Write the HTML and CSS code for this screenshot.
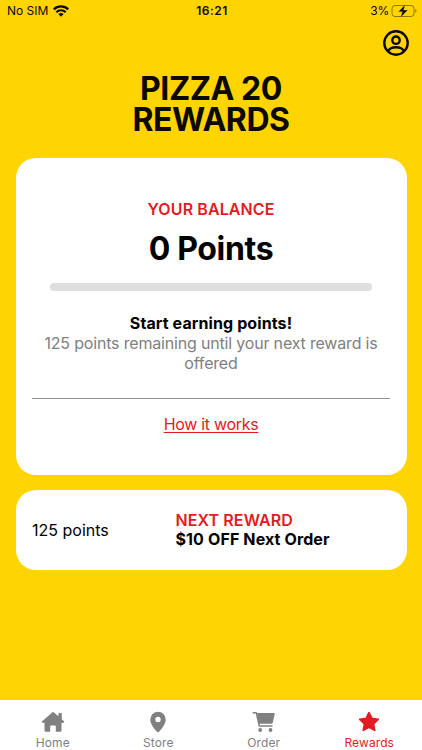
FILE: index.html
```html
<!DOCTYPE html>
<html lang="en">
<head>
<meta charset="utf-8">
<meta name="viewport" content="width=device-width, initial-scale=1">
<title>Pizza 20 Rewards</title>
<link rel="stylesheet" href="styles.css">
</head>
<body>
<div class="app">
  <header class="status">
    <div class="status-left">
      <span class="carrier">No SIM</span>
      <svg class="wifi" viewBox="0 0 16 12" width="16" height="12">
        <g fill="none" stroke="#0b0900" stroke-width="2.200">
          <path d="M.8 4.400a10.200 10.200 0 0 1 14.400 0"/>
          <path d="M3.300 7.200a6.700 6.700 0 0 1 9.400 0"/>
        </g>
        <path fill="#0b0900" d="M8 11.800 5.400 9.100a3.800 3.800 0 0 1 5.200 0z"/>
      </svg>
    </div>
    <span class="clock">16:21</span>
    <div class="status-right">
      <span class="percent">3%</span>
      <svg class="battery" viewBox="0 0 26 14" width="26" height="14">
        <rect x="1" y="1.500" width="22" height="11" rx="3" fill="none" stroke="#927800" stroke-width="1"/>
        <path d="M24.300 5.100c1.500.5 1.500 3.100 0 3.600z" fill="#927800"/>
        <path d="M14.400.2 7.400 7.800h4L9.400 13.800l7.400-7.700h-4.200z" fill="#0b0900" stroke="#ffd400" stroke-width=".3"/>
      </svg>
    </div>
  </header>

  <div class="toolbar">
    <svg class="account" viewBox="0 0 28 28" width="28" height="28" fill="none" stroke="#0b0900" stroke-width="2.400">
      <circle cx="14" cy="14" r="11.700"/>
      <circle cx="14" cy="11.200" r="3.700"/>
      <path d="M6 22.200c1.300-2.700 4.300-4 8-4s6.700 1.300 8 4"/>
    </svg>
  </div>

  <h1 class="title">PIZZA 20<br>REWARDS</h1>

  <main class="cards">
    <section class="card balance">
      <h2 class="balance-label">YOUR BALANCE</h2>
      <p class="balance-value">0 Points</p>
      <div class="progress"></div>
      <p class="cta">Start earning points!</p>
      <p class="remaining">125 points remaining until your next reward is<br>offered</p>
      <hr class="divider">
      <a class="how">How it works</a>
    </section>
    <section class="card next">
      <span class="cost">125 points</span>
      <div class="reward">
        <h2 class="reward-label">NEXT REWARD</h2>
        <p class="reward-name">$10 OFF Next Order</p>
      </div>
    </section>
  </main>

  <nav class="tabs">
    <a class="tab">
      <svg viewBox="0 0 24 22" width="24" height="22" fill="currentColor">
        <path d="M12 .8.900 10.500q-.6.900.5 1.200h2.100v7.700q0 1.400 1.400 1.400h4.300v-5.500q0-.9.900-.9h3.800q.9 0 .9.900v5.500h4.300q1.400 0 1.400-1.400v-7.700h2.100q1.100-.3.500-1.200L20.800 8.100V2.800q0-.7-.7-.7h-2q-.7 0-.7.700v2.500z"/>
      </svg>
      <span class="tab-name">Home</span>
    </a>
    <a class="tab">
      <svg viewBox="0 0 24 22" width="24" height="22" fill="currentColor">
        <path fill-rule="evenodd" d="M12 .8a7.700 7.700 0 0 0-7.700 7.700c0 4.300 3.700 9.300 6.700 12.200q1 .9 2 0c3-2.900 6.700-7.900 6.700-12.200A7.700 7.700 0 0 0 12 .8zm0 5a2.700 2.700 0 1 1 0 5.400 2.700 2.700 0 0 1 0-5.400z"/>
      </svg>
      <span class="tab-name">Store</span>
    </a>
    <a class="tab">
      <svg viewBox="0 0 24 22" width="24" height="22" fill="currentColor">
        <path d="M4.900 2.100h17.200q.8 0 .6.900l-2 8.800q-.3 1-1.300 1H7z"/>
        <path d="M1.200 1.800h3.100l3 13.200h12.600" fill="none" stroke="currentColor" stroke-width="1.500" stroke-linecap="round" stroke-linejoin="round"/>
        <circle cx="8.200" cy="19" r="1.900"/>
        <circle cx="18.500" cy="19" r="1.900"/>
      </svg>
      <span class="tab-name">Order</span>
    </a>
    <a class="tab tab-active">
      <svg viewBox="0 0 24 22" width="24" height="22" fill="currentColor" stroke="currentColor" stroke-width="1.800" stroke-linejoin="round">
        <path d="m12 1.700 2.800 5.800 6.400.9-4.700 4.500 1.200 6.400-5.700-3.100-5.700 3.100 1.200-6.400-4.700-4.500 6.400-.9z"/>
      </svg>
      <span class="tab-name">Rewards</span>
    </a>
  </nav>
</div>
</body>
</html>
```
FILE: styles.css
```css
* {
  box-sizing: border-box;
}

body {
  margin: 0;
  font-family: Inter, "Liberation Sans", sans-serif;
  font-size: 16px;
  line-height: 20px;
  color: #000;
}

h1, h2, p {
  margin: 0;
}

svg {
  display: block;
  flex: none;
}

.app {
  display: flex;
  flex-direction: column;
  height: 750px;
  background: #ffd400;
  overflow: hidden;
}

.status {
  display: grid;
  grid-template-columns: 1fr auto 1fr;
  align-items: center;
  height: 22px;
  padding: 0 5px 0 7px;
  font-size: 12px;
  color: #0b0900;
}

.status-left,
.status-right {
  display: flex;
  align-items: center;
}

.status-left {
  gap: 5px;
}

.status-right {
  justify-content: flex-end;
  gap: 2px;
}

.percent {
  letter-spacing: -0.2px;
}

.clock {
  font-weight: 600;
  letter-spacing: 0.5px;
}

.toolbar {
  display: flex;
  justify-content: flex-end;
  padding: 7px 12px 0 0;
}

.title {
  margin-top: 17px;
  font-size: 32px;
  line-height: 30.5px;
  font-weight: 700;
  letter-spacing: -0.45px;
  text-align: center;
  color: #0b0900;
}

.cards {
  display: flex;
  flex-direction: column;
  gap: 15px;
  padding: 23px 15.5px 0;
}

.card {
  border-radius: 20px;
  background: #fff;
}

.balance {
  display: flex;
  flex-direction: column;
  align-items: center;
  height: 316.5px;
  padding: 41px 16.5px 0;
  text-align: center;
}

.balance-label,
.reward-label {
  font-size: 16px;
  line-height: 20px;
  font-weight: 600;
  letter-spacing: 0.1px;
  color: #e31b23;
}

.balance-value {
  margin-top: 10px;
  font-size: 32px;
  line-height: 40px;
  font-weight: 700;
  letter-spacing: -0.35px;
}

.progress {
  width: 322px;
  height: 8px;
  margin-top: 14px;
  border-radius: 4px;
  background: #dedede;
}

.cta {
  margin-top: 22px;
  font-weight: 700;
  letter-spacing: 0.1px;
}

.remaining {
  margin-top: 1px;
  line-height: 19.5px;
  letter-spacing: -0.18px;
  color: #808080;
  white-space: nowrap;
}

.divider {
  width: 100%;
  height: 1px;
  margin: 25px 0 15px;
  border: 0;
  background: #909090;
}

.how {
  letter-spacing: -0.3px;
  color: #e31b23;
  text-decoration: underline;
  text-decoration-thickness: 1px;
  text-underline-offset: 2px;
}

.next {
  display: grid;
  grid-template-columns: 143.5px 1fr;
  align-items: center;
  height: 80.5px;
  padding: 0 16.5px;
}

.reward-name {
  margin-top: -1px;
  font-weight: 700;
  letter-spacing: 0.12px;
}

.tabs {
  display: grid;
  grid-template-columns: repeat(4, 1fr);
  height: 50px;
  margin-top: auto;
  background: #fff;
}

.tab {
  display: flex;
  flex-direction: column;
  align-items: center;
  padding-top: 11px;
  color: #808080;
}

.tab-name {
  font-size: 12px;
  line-height: 19px;
  letter-spacing: 0.1px;
}

.tab-active {
  color: #e31b23;
}
```
